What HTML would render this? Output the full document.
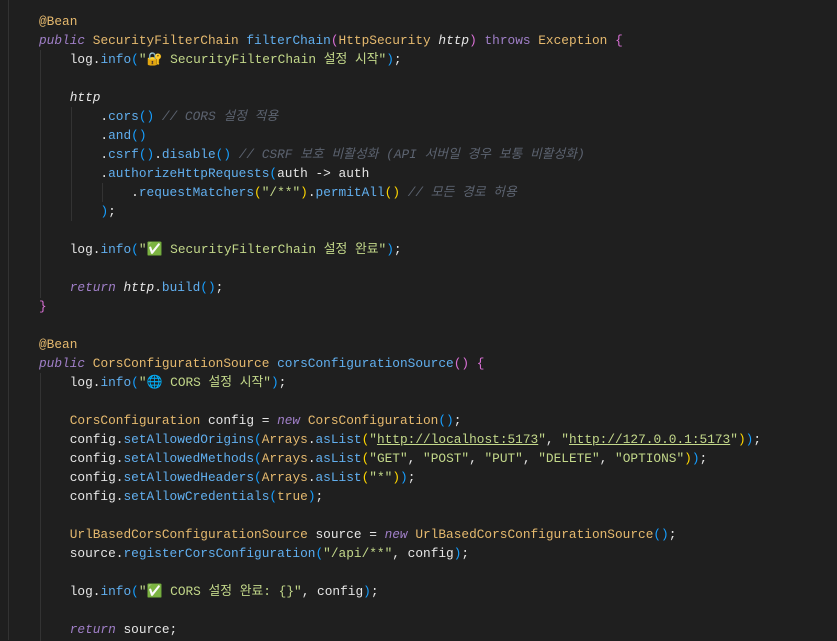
<!DOCTYPE html>
<html><head><meta charset="utf-8"><style>
body{margin:0;background:#1f1f1f;width:837px;height:640px;overflow:hidden;position:relative}
.c{position:absolute;left:39px;top:12px;font-family:"Liberation Mono","Noto Sans CJK KR",monospace;font-size:12.8px;line-height:19px;color:#e6e6e6;white-space:pre}
.k{color:#a07fc8;font-style:italic}.t{color:#a07fc8}
.y{color:#e5b96e}.f{color:#61afef}.s{color:#c3d88a}.cm{color:#5c6370;font-style:italic}
.a{color:#e6e6e6}.i{font-style:italic}.g{color:#ffd700}.o{color:#da70d6}.b{color:#179fff}.u{text-decoration:underline}
.n{color:#e5b96e}
.gd{position:absolute;width:1px;background:#333}
</style></head><body>
<div class="gd" style="left:8px;top:0;height:640px"></div>
<div class="gd" style="left:40px;top:50px;height:248px"></div>
<div class="gd" style="left:71px;top:107px;height:114px"></div>
<div class="gd" style="left:102px;top:183px;height:19px"></div>
<div class="gd" style="left:40px;top:373px;height:268px"></div>
<div class="c"><span class="y">@Bean</span>
<span class="k">public</span> <span class="y">SecurityFilterChain</span> <span class="f">filterChain</span><span class="o">(</span><span class="y">HttpSecurity</span> <span class="i">http</span><span class="o">)</span> <span class="t">throws</span> <span class="y">Exception</span> <span class="o">{</span>
    log.<span class="f">info</span><span class="b">(</span><span class="s">"🔐 SecurityFilterChain 설정 시작"</span><span class="b">)</span>;

    <span class="i">http</span>
        .<span class="f">cors</span><span class="b">()</span> <span class="cm">// CORS 설정 적용</span>
        .<span class="f">and</span><span class="b">()</span>
        .<span class="f">csrf</span><span class="b">()</span>.<span class="f">disable</span><span class="b">()</span> <span class="cm">// CSRF 보호 비활성화 (API 서버일 경우 보통 비활성화)</span>
        .<span class="f">authorizeHttpRequests</span><span class="b">(</span>auth -&gt; auth
            .<span class="f">requestMatchers</span><span class="g">(</span><span class="s">"/**"</span><span class="g">)</span>.<span class="f">permitAll</span><span class="g">()</span> <span class="cm">// 모든 경로 허용</span>
        <span class="b">)</span>;

    log.<span class="f">info</span><span class="b">(</span><span class="s">"✅ SecurityFilterChain 설정 완료"</span><span class="b">)</span>;

    <span class="k">return</span> <span class="i">http</span>.<span class="f">build</span><span class="b">()</span>;
<span class="o">}</span>

<span class="y">@Bean</span>
<span class="k">public</span> <span class="y">CorsConfigurationSource</span> <span class="f">corsConfigurationSource</span><span class="o">()</span> <span class="o">{</span>
    log.<span class="f">info</span><span class="b">(</span><span class="s">"🌐 CORS 설정 시작"</span><span class="b">)</span>;

    <span class="y">CorsConfiguration</span> config = <span class="k">new</span> <span class="y">CorsConfiguration</span><span class="b">()</span>;
    config.<span class="f">setAllowedOrigins</span><span class="b">(</span><span class="y">Arrays</span>.<span class="f">asList</span><span class="g">(</span><span class="s">"<span class="u">http://localhost:5173</span>"</span>, <span class="s">"<span class="u">http://127.0.0.1:5173</span>"</span><span class="g">)</span><span class="b">)</span>;
    config.<span class="f">setAllowedMethods</span><span class="b">(</span><span class="y">Arrays</span>.<span class="f">asList</span><span class="g">(</span><span class="s">"GET"</span>, <span class="s">"POST"</span>, <span class="s">"PUT"</span>, <span class="s">"DELETE"</span>, <span class="s">"OPTIONS"</span><span class="g">)</span><span class="b">)</span>;
    config.<span class="f">setAllowedHeaders</span><span class="b">(</span><span class="y">Arrays</span>.<span class="f">asList</span><span class="g">(</span><span class="s">"*"</span><span class="g">)</span><span class="b">)</span>;
    config.<span class="f">setAllowCredentials</span><span class="b">(</span><span class="n">true</span><span class="b">)</span>;

    <span class="y">UrlBasedCorsConfigurationSource</span> source = <span class="k">new</span> <span class="y">UrlBasedCorsConfigurationSource</span><span class="b">()</span>;
    source.<span class="f">registerCorsConfiguration</span><span class="b">(</span><span class="s">"/api/**"</span>, config<span class="b">)</span>;

    log.<span class="f">info</span><span class="b">(</span><span class="s">"✅ CORS 설정 완료: {}"</span>, config<span class="b">)</span>;

    <span class="k">return</span> source;
</div>
</body></html>
